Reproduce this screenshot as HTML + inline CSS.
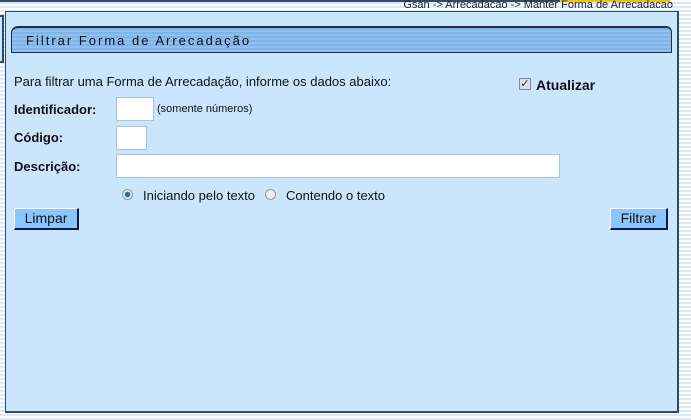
<!DOCTYPE html>
<html><head><meta charset="utf-8"><style>
*{margin:0;padding:0;box-sizing:border-box}
body{width:691px;height:420px;overflow:hidden;position:relative;font-family:"Liberation Sans",Arial,sans-serif;
background:repeating-linear-gradient(#ffffff 0 2px,#dbe9f7 2px 4px);}
.abs{position:absolute}
#topline{left:0;top:0;width:560px;height:2px;background:#2c4a6a}
#yel{left:560px;top:0;width:110px;height:2px;background:#f5c400}
#crumb{right:18px;top:0;font-size:11px;color:#222;line-height:11px;padding-left:3px}
#leftbox{left:-2px;top:15px;width:6px;height:48px;border:2px solid #2c4a6a;background:#cbe5fd}
#panel{left:5px;top:11px;width:674px;height:402px;background:#cbe5fd;border:1px solid #2c4a6a;border-right:2px solid #2c4a6a;border-bottom:2px solid #2c4a6a}
#title{left:11px;top:26px;width:661px;height:27px;border:1px solid #1f2f44;border-top-width:2px;border-radius:7px 6px 0 0;
background:repeating-linear-gradient(#7fb3ea 0 2px,#8fc0f0 2px 4px);font-size:13px;letter-spacing:2px;color:#111;padding:5px 0 0 14px}
.t{font-size:13px;color:#111}
.b{font-weight:bold;font-size:13px;color:#111}
.in{background:#fff;border:1px solid #a8c3dd;height:24px}
.btn{background:#8cc4fc;border:1px solid #fff;border-right:2px solid #0a1a50;border-bottom:2px solid #0a1a50;font-size:14px;color:#111;text-align:center;line-height:18px;height:22px}
.radio{width:11px;height:11px;border-radius:50%;border:1px solid #8a9aa8;background:#eee}
</style></head><body>
<div class="abs" id="topline"></div><div class="abs" id="yel"></div>
<div class="abs" id="crumb">Gsan -&gt; Arrecadacao -&gt; Manter Forma de Arrecadacao</div>
<div class="abs" id="leftbox"></div>
<div class="abs" id="panel"></div>
<div class="abs" id="title">Filtrar Forma de Arrecadação</div>
<div class="abs t" style="left:14px;top:74px">Para filtrar uma Forma de Arrecadação, informe os dados abaixo:</div>
<div class="abs" style="left:519px;top:78px;width:12px;height:12px;border:1px solid #7a8a9a;background:#dde;color:#334;font-size:11px;line-height:10px;text-align:center">✓</div>
<div class="abs b" style="left:536px;top:77px;font-size:14px">Atualizar</div>
<div class="abs b" style="left:14px;top:102px">Identificador:</div>
<div class="abs in" style="left:116px;top:97px;width:38px"></div>
<div class="abs" style="left:157px;top:103px;font-size:11px;color:#111">(somente números)</div>
<div class="abs b" style="left:14px;top:130px">Código:</div>
<div class="abs in" style="left:116px;top:126px;width:31px"></div>
<div class="abs b" style="left:14px;top:159px">Descrição:</div>
<div class="abs in" style="left:116px;top:154px;width:444px"></div>
<div class="abs radio" style="left:122px;top:189px;background:radial-gradient(#1a6fb0 0 2.5px,#eee 3px)"></div>
<div class="abs t" style="left:143px;top:188px">Iniciando pelo texto</div>
<div class="abs radio" style="left:265px;top:189px"></div>
<div class="abs t" style="left:286px;top:188px">Contendo o texto</div>
<div class="abs btn" style="left:14px;top:208px;width:65px">Limpar</div>
<div class="abs btn" style="left:610px;top:208px;width:58px">Filtrar</div>
</body></html>
